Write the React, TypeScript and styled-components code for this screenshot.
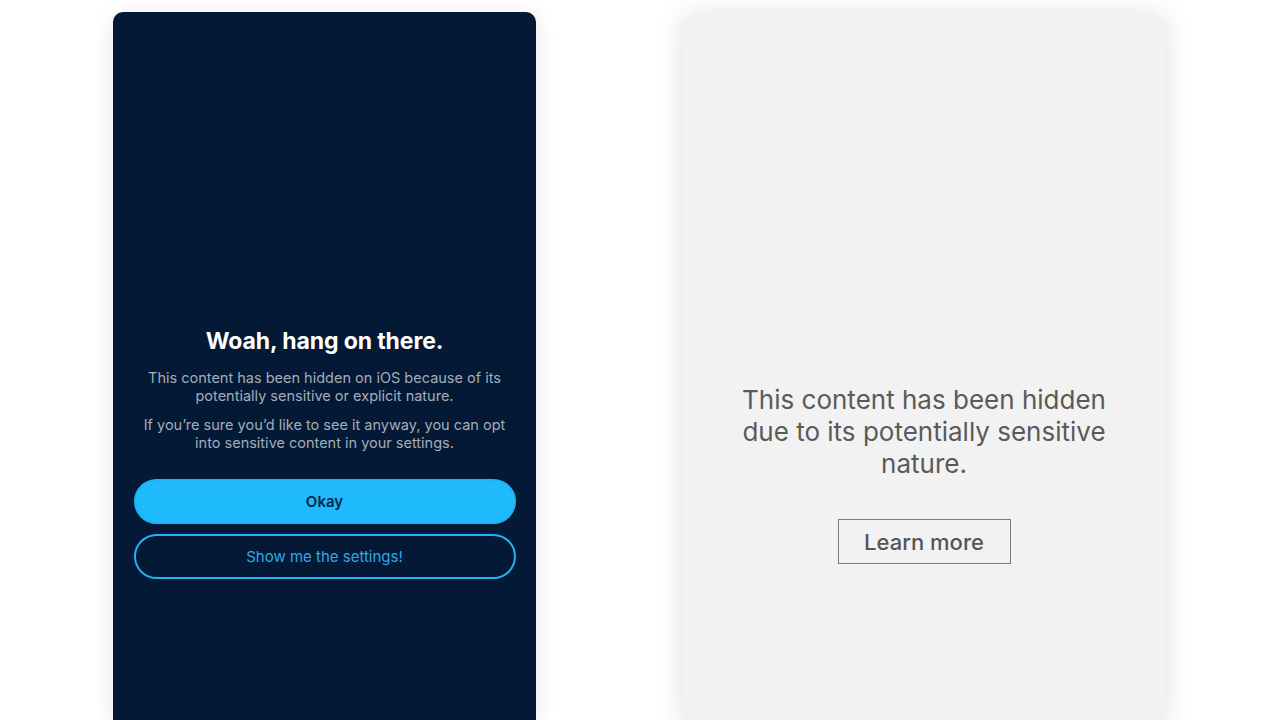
import React from 'react';
import styled, { createGlobalStyle } from 'styled-components';

const GlobalStyle = createGlobalStyle`
  html, body {
    margin: 0;
    padding: 0;
    background: #ffffff;
    overflow: hidden;
  }
  body {
    font-family: Inter, "Noto Sans", sans-serif;
  }
`;

const Stage = styled.div`
  display: flex;
  align-items: flex-start;
  gap: 148px;
  padding: 12px 0 0 113px;
  height: 720px;
  box-sizing: border-box;
  overflow: hidden;
`;

// cards run off the bottom of the frame, so only the top corners are rounded
const Card = styled.div<{ $dark?: boolean; $width: number }>`
  width: ${(p) => p.$width}px;
  height: 708px;
  flex-shrink: 0;
  border-radius: ${(p) => (p.$dark ? '10px 10px 0 0' : '14px 14px 0 0')};
  background: ${(p) => (p.$dark ? '#031935' : '#f2f2f2')};
  box-shadow: ${(p) =>
    p.$dark ? '0 4px 20px rgba(40, 40, 80, 0.12)' : '0 4px 28px rgba(40, 40, 90, 0.16)'};
  display: flex;
  flex-direction: column;
  align-items: center;
  box-sizing: border-box;
`;

const DarkBody = styled.div`
  display: flex;
  flex-direction: column;
  align-items: center;
  padding: 314px 20px 0;
  width: 100%;
  box-sizing: border-box;
`;

const Title = styled.h2`
  margin: 0 0 13px;
  font-size: 23px;
  font-weight: 700;
  color: #ffffff;
  letter-spacing: -0.1px;
  line-height: 30px;
`;

const Note = styled.p`
  margin: 0 0 11px;
  font-size: 14.5px;
  line-height: 18px;
  color: #a4adb9;
  text-align: center;
`;

const PillButton = styled.button<{ $filled?: boolean }>`
  width: 382px;
  height: 45px;
  margin-top: ${(p) => (p.$filled ? 16 : 10)}px;
  border-radius: 23px;
  font-family: inherit;
  font-size: 15px;
  font-weight: ${(p) => (p.$filled ? 600 : 400)};
  cursor: pointer;
  box-sizing: border-box;
  border: 2px solid #1fb2f5;
  background: ${(p) => (p.$filled ? '#1ebafc' : 'transparent')};
  color: ${(p) => (p.$filled ? '#0a2447' : '#2ea9ea')};
`;

const LightBody = styled.div`
  display: flex;
  flex-direction: column;
  align-items: center;
  padding: 372px 40px 0;
  width: 100%;
  box-sizing: border-box;
`;

const Hidden = styled.p`
  margin: 0;
  font-size: 26px;
  line-height: 32px;
  color: #5a5a5a;
  text-align: center;
  max-width: 380px;
`;

const OutlineButton = styled.button`
  margin-top: 39px;
  width: 173px;
  height: 45px;
  border: 1.5px solid #7a7a7a;
  border-radius: 0;
  background: transparent;
  font-family: inherit;
  font-size: 22px;
  font-weight: 500;
  color: #555555;
  cursor: pointer;
`;

export default function App() {
  return (
    <>
      <GlobalStyle />
      <Stage>
        <Card $dark $width={423}>
          <DarkBody>
            <Title>Woah, hang on there.</Title>
            <Note>
              This content has been hidden on iOS because of its
              <br />
              potentially sensitive or explicit nature.
            </Note>
            <Note>
              If you’re sure you’d like to see it anyway, you can opt
              <br />
              into sensitive content in your settings.
            </Note>
            <PillButton $filled>Okay</PillButton>
            <PillButton>Show me the settings!</PillButton>
          </DarkBody>
        </Card>
        <Card $width={480}>
          <LightBody>
            <Hidden>This content has been hidden due to its potentially sensitive nature.</Hidden>
            <OutlineButton>Learn more</OutlineButton>
          </LightBody>
        </Card>
      </Stage>
    </>
  );
}
